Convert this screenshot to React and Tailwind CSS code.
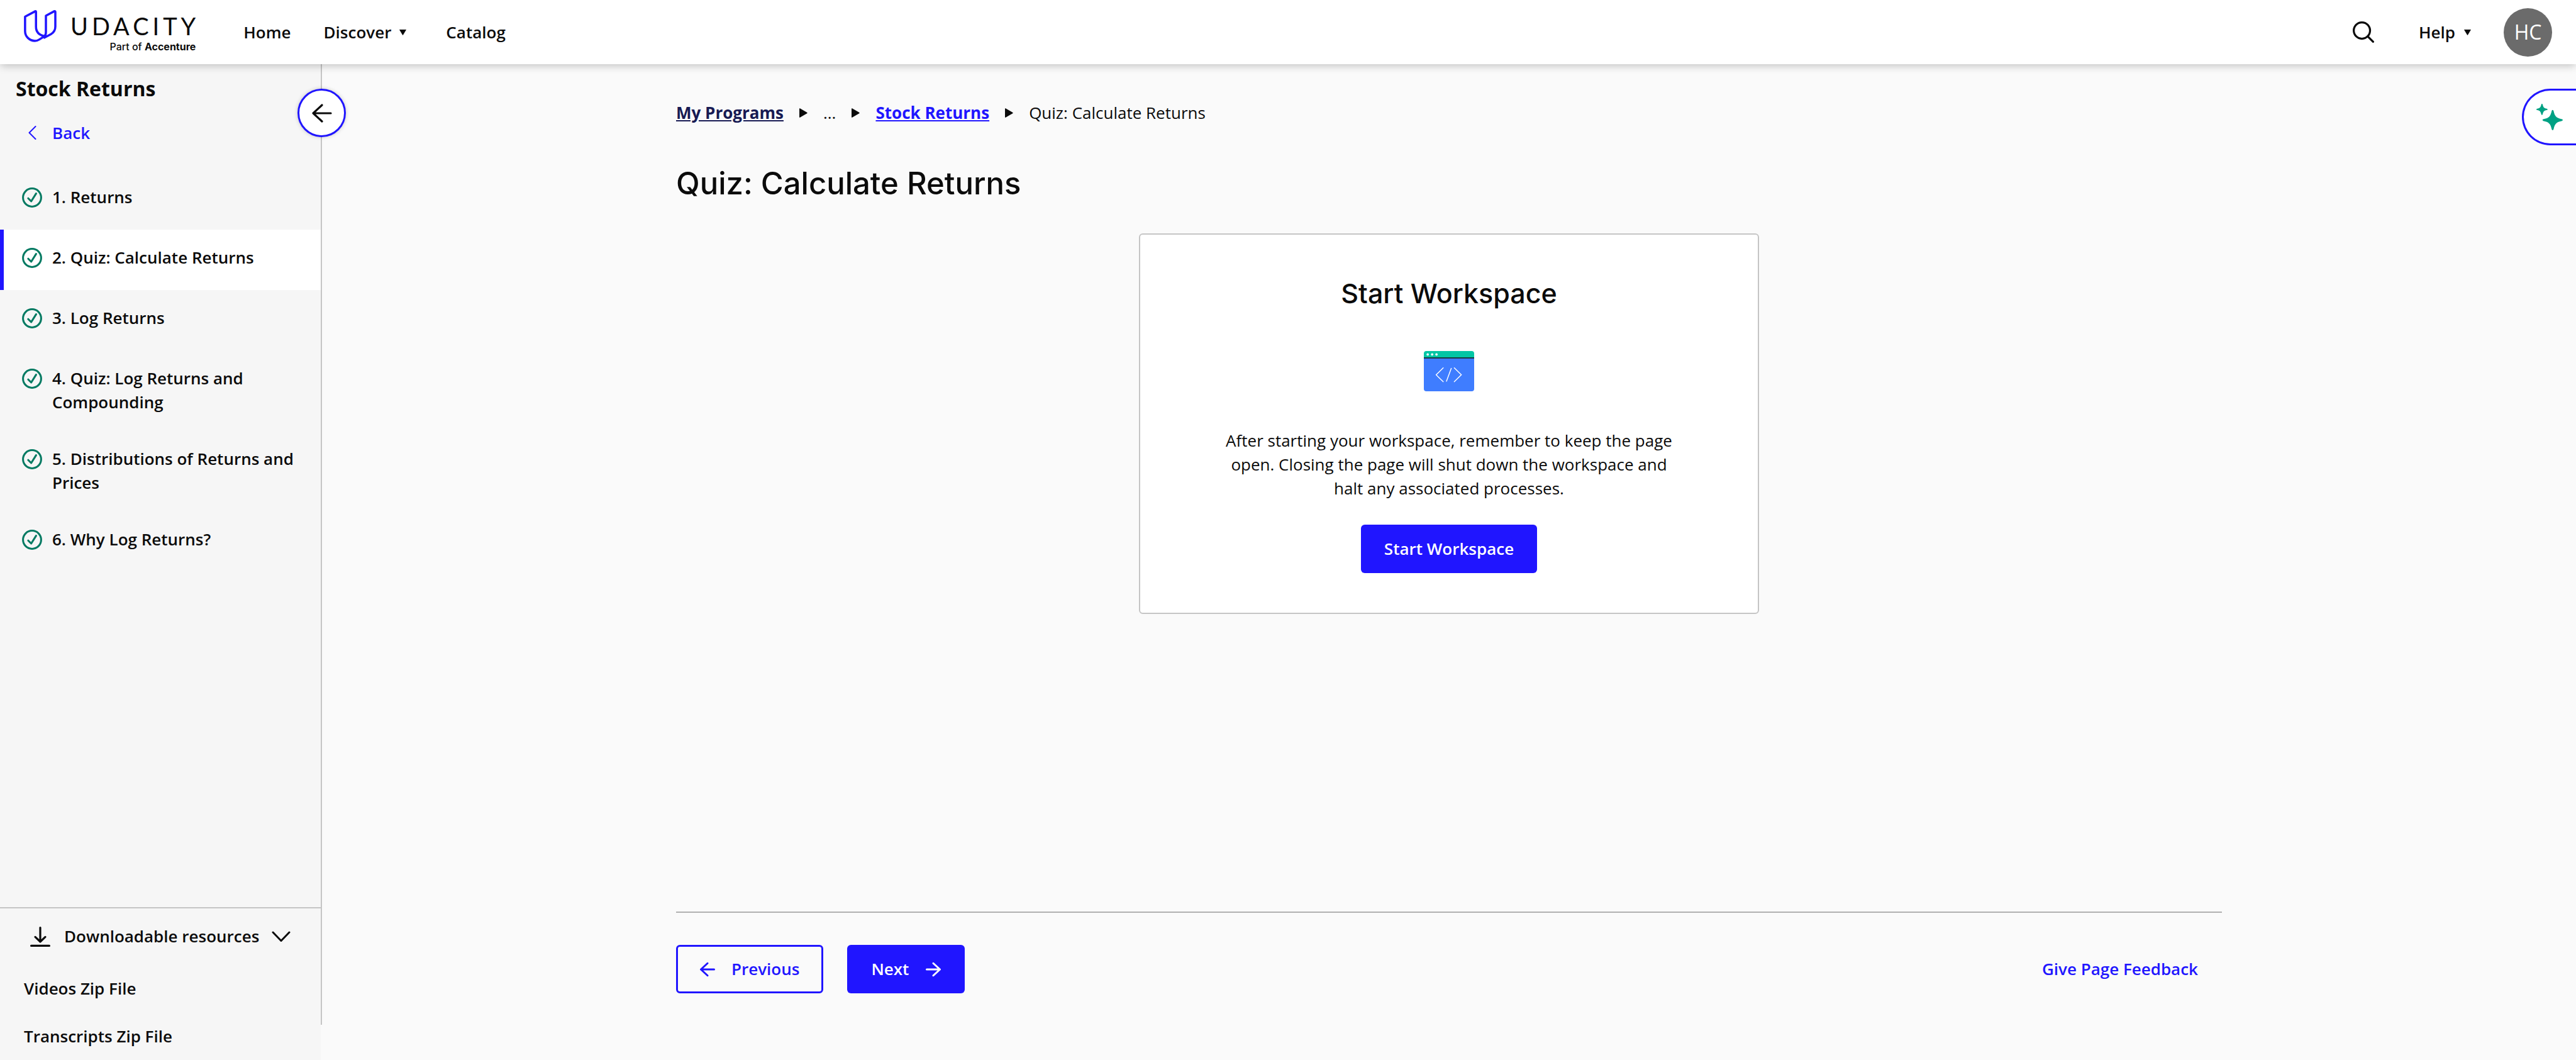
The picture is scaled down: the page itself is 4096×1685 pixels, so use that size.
const lessons = [
  { title: "1. Returns" },
  { title: "2. Quiz: Calculate Returns", current: true },
  { title: "3. Log Returns" },
  { title: "4. Quiz: Log Returns and Compounding" },
  { title: "5. Distributions of Returns and Prices" },
  { title: "6. Why Log Returns?" },
];

function Logo() {
  return (
    <a href="#" aria-label="Udacity, part of Accenture" className="flex items-start gap-[22px] pt-[16px]">
      <svg viewBox="0 0 65 64" className="h-[51px] w-[52px]" fill="none" stroke="#2015ff" strokeWidth="4.4" strokeLinejoin="round">
        <path d="M2.2 13.2 L22.6 2.3 Q24 2.4 24 4 V33 C24 43 30 50 41 52 L31 58.5 C27 61 25 61.6 22 61.6 C11 61 2.2 53 2.2 42 Z" />
        <path d="M43.8 11.2 L60.5 2.3 Q62.6 2.4 62.6 4 V33 C62.6 40 60 44.500 54 48 L41 55 V52 C43.500 50 43.8 47 43.8 44 Z" />
      </svg>
      <span className="flex flex-col items-end pt-[6px]">
        <span className="-mr-[6px] font-['Lato'] text-[38px] leading-[38px] tracking-[6px]">UDACITY</span>
        <span className="mt-1 font-['Inter'] text-[16px] leading-[20px] font-medium">
          Part of <b className="font-bold">Accenture</b>
        </span>
      </span>
    </a>
  );
}

function DownTriangle() {
  return (
    <svg viewBox="0 0 11 9" className="h-[9px] w-[11px]" fill="currentColor" aria-hidden="true">
      <path d="M0.600 0h9.800q.6 0 .4.600L6 8.600q-.5.600-1 0L.2.600Q0 0 .6 0z" />
    </svg>
  );
}

function RightTriangle() {
  return (
    <svg viewBox="0 0 13 15" className="h-[15px] w-[13px]" fill="currentColor" aria-hidden="true">
      <path d="M0 1q0-1.200 1-.700L12.200 6.700q1 .800 0 1.600L1 14.700q-1 .500-1-.700z" />
    </svg>
  );
}

function Arrow({ className, flip, strokeWidth = 4 }) {
  return (
    <svg viewBox="0 0 32 32" className={className} fill="none" stroke="currentColor" strokeWidth={strokeWidth} strokeLinecap="round" strokeLinejoin="round" aria-hidden="true">
      {flip ? <path d="M2 16H30M16 3L30 16L16 29" /> : <path d="M30 16H2M16 3L2 16L16 29" />}
    </svg>
  );
}

function CheckCircle() {
  return (
    <svg viewBox="0 0 40 40" className="mt-1 h-8 w-8 shrink-0" fill="none" stroke="#047a62" aria-hidden="true">
      <circle cx="20" cy="20" r="18" strokeWidth="3.800" />
      <path d="M12.300 21.500L18.300 27.500L28 12" strokeWidth="3.800" strokeLinecap="round" strokeLinejoin="round" />
    </svg>
  );
}

function Header() {
  return (
    <header className="relative z-20 flex h-[102px] shrink-0 justify-between bg-white px-[38px] shadow-[0_4px_12px_-1px_rgba(0,0,0,0.22)]">
      <div className="flex">
        <Logo />
        <nav className="ml-[76px] flex items-center text-[26px] font-semibold">
          <a href="#">Home</a>
          <button type="button" className="ml-[52px] flex items-center gap-[13px]">
            Discover <DownTriangle />
          </button>
          <a href="#" className="ml-[63px]">Catalog</a>
        </nav>
      </div>
      <div className="flex items-center">
        <button type="button" aria-label="Search">
          <svg viewBox="0 0 42 42" className="h-[34px] w-[34px]" fill="none" stroke="currentColor" strokeWidth="4" strokeLinecap="round">
            <circle cx="18" cy="18" r="16" />
            <path d="M29.500 29.500L40 40" />
          </svg>
        </button>
        <button type="button" className="ml-[71px] flex items-center gap-[14px] text-[26px] font-semibold">
          Help <DownTriangle />
        </button>
        <button type="button" aria-label="Account" className="ml-[52px] flex h-[77px] w-[77px] items-center justify-center rounded-full bg-[#6b6b6b] text-[32px] text-white">
          HC
        </button>
      </div>
    </header>
  );
}

function Sidebar() {
  return (
    <aside className="relative h-[calc(100vh-158px)] w-[512px] shrink-0 border-r-2 border-[#c5c5c5]">
      <div className="flex h-[calc(100vh-102px)] flex-col bg-[#f6f6f6]">
        <h2 className="pt-[19px] pl-[25px] text-[32px] leading-[40px] font-bold">Stock Returns</h2>
        <a href="#" className="mt-[31px] flex items-center pl-[45px] text-[26px] leading-[38px] font-semibold text-[#2015ff]">
          <svg viewBox="0 0 13 22" className="mr-[25px] h-[22px] w-[13px]" fill="none" stroke="currentColor" strokeWidth="2" strokeLinecap="round" strokeLinejoin="round" aria-hidden="true">
            <path d="M11.500 1L1.500 11L11.500 21" />
          </svg>
          Back
        </a>
        <ul className="mt-[39px]">
          {lessons.map((l) => (
            <li key={l.title}>
              <a
                href="#"
                className={
                  "flex min-h-[96px] items-start gap-[16px] border-l-6 pt-[25px] pr-8 pb-[27px] pl-[29px] text-[26px] leading-[38px] font-semibold " +
                  (l.current ? "border-[#2015ff] bg-white" : "border-transparent")
                }
              >
                <CheckCircle />
                <span>{l.title}</span>
              </a>
            </li>
          ))}
        </ul>
        <div className="mt-auto border-t-2 border-[#c5c5c5] text-[26px] font-semibold">
          <button type="button" className="flex h-[89px] w-full items-center pl-12">
            <svg viewBox="0 0 40 40" className="mr-[22px] h-8 w-8" fill="none" stroke="currentColor" strokeWidth="4" strokeLinecap="round" strokeLinejoin="round" aria-hidden="true">
              <path d="M20 2V30M10 20.500L20 30L30 20.500M2 38H38" />
            </svg>
            Downloadable resources
            <svg viewBox="0 0 30 18" className="ml-[20px] h-[18px] w-[30px]" fill="none" stroke="currentColor" strokeWidth="3" strokeLinecap="round" strokeLinejoin="round" aria-hidden="true">
              <path d="M2 2L15 15.500L28 2" />
            </svg>
          </button>
          <a href="#" className="flex h-[76px] items-center pl-[38px]">Videos Zip File</a>
          <a href="#" className="flex h-[76px] items-center pl-[38px]">Transcripts Zip File</a>
        </div>
      </div>
      <button type="button" aria-label="Collapse sidebar" className="absolute top-[39px] -right-[40px] flex h-[77px] w-[77px] items-center justify-center rounded-full border-3 border-[#2015ff] bg-white shadow-[0_0_6px_rgba(0,0,0,0.2)]">
        <Arrow className="h-8 w-8" strokeWidth={3.2} />
      </button>
    </aside>
  );
}

function WorkspaceIcon() {
  return (
    <svg viewBox="0 0 100 80" className="mt-[64px] h-16 w-20" fill="none" aria-hidden="true">
      <path d="M0 14V5Q0 0 5 0H95Q100 0 100 5V14Z" fill="#02c6a4" />
      <path d="M0 14H100V75Q100 80 95 80H5Q0 80 0 75Z" fill="#3f7dff" />
      <path d="M-1 13.800H101" stroke="#111" strokeWidth="2" />
      <g fill="#fff">
        <circle cx="7.700" cy="6.800" r="2.300" />
        <circle cx="16.500" cy="6.800" r="2.300" />
        <circle cx="25.200" cy="6.800" r="2.300" />
      </g>
      <path d="M38.500 33.500L24.500 47.300L38.500 61M54.500 34.500L45 60M60.500 33.500L74.500 47.300L60.500 61" stroke="#fff" strokeWidth="1.800" strokeLinecap="round" />
    </svg>
  );
}

function WorkspaceCard() {
  return (
    <section className="mx-auto mt-[47px] flex w-full max-w-[986px] flex-col items-center rounded-md border-2 border-[#c5c5c5] bg-white pt-[65px] pb-[63px]">
      <h2 className="font-['Inter'] text-[43px] leading-[56px] font-medium">Start Workspace</h2>
      <WorkspaceIcon />
      <p className="mt-[59px] max-w-[720px] text-center text-[26px] leading-[38px]">
        After starting your workspace, remember to keep the page open. Closing the page will shut down the workspace and halt any associated processes.
      </p>
      <button type="button" className="mt-[39px] h-[77px] rounded-md bg-[#2015ff] px-[37px] text-[26px] font-semibold text-white">
        Start Workspace
      </button>
    </section>
  );
}

function Main() {
  return (
    <main className="flex flex-1 flex-col">
      <div className="mx-auto flex w-full max-w-[2458px] flex-1 flex-col">
        <nav aria-label="Breadcrumb" className="mt-[58px] flex items-center gap-[25px] text-[26px] leading-[38px]">
          <a href="#" className="font-bold text-[#171a53] underline">My Programs</a>
          <RightTriangle />
          <span>...</span>
          <RightTriangle />
          <a href="#" className="font-bold text-[#2015ff] underline">Stock Returns</a>
          <RightTriangle />
          <span>Quiz: Calculate Returns</span>
        </nav>
        <h1 className="mt-[62px] font-['Inter'] text-[49px] leading-[64px] font-medium">Quiz: Calculate Returns</h1>
        <WorkspaceCard />
        <footer className="mt-auto mb-[106px] flex items-center border-t-2 border-[#b0b0b0] pt-[51px] text-[26px] font-semibold">
          <button type="button" className="flex h-[77px] items-center gap-[26px] rounded-md border-3 border-[#2015ff] px-[35px] text-[#2015ff]">
            <Arrow className="h-[24px] w-[24px]" />
            Previous
          </button>
          <button type="button" className="ml-[38px] flex h-[77px] items-center gap-[27px] rounded-md bg-[#2015ff] px-[38px] text-white">
            Next
            <Arrow className="h-[24px] w-[24px]" flip />
          </button>
          <a href="#" className="mr-[38px] ml-auto text-[#2015ff]">Give Page Feedback</a>
        </footer>
      </div>
    </main>
  );
}

export default function App() {
  return (
    <div className="relative flex h-screen flex-col overflow-hidden bg-[#fafafa] font-['Open_Sans',sans-serif] text-[#0b0b0b]">
      <Header />
      <div className="flex min-h-0 flex-1">
        <Sidebar />
        <Main />
      </div>
      <button type="button" aria-label="Open assistant" className="absolute top-[141px] right-0 flex h-[90px] w-[86px] items-center rounded-l-full border-3 border-r-0 border-[#2015ff] bg-white pl-[20px]">
        <svg viewBox="0 0 52 52" className="h-[42px] w-[42px]" fill="#00a183" aria-hidden="true">
          <path d="M32 12q1.500 0 2 2.500c2 9 4.500 13.500 15.500 15.500q2.500.500 2.500 2t-2.500 2c-11 2-13.500 6.500-15.500 15.500q-.5 2.500-2 2.500t-2-2.500c-2-9-4.500-13.500-15.500-15.500q-2.500-.500-2.500-2t2.500-2c11-2 13.500-6.500 15.500-15.500q.5-2.500 2-2.500z" />
          <path d="M11 0q1 0 1.400 1.500c1 5 2.600 7.100 8.100 8.100q1.500.400 1.500 1.400t-1.500 1.400c-5.500 1-7.100 3.100-8.100 8.100q-.400 1.500-1.400 1.500t-1.400-1.500c-1-5-2.600-7.100-8.100-8.100q-1.500-.400-1.500-1.400t1.500-1.400c5.500-1 7.100-3.100 8.100-8.100q.400-1.500 1.400-1.500z" />
        </svg>
      </button>
    </div>
  );
}
